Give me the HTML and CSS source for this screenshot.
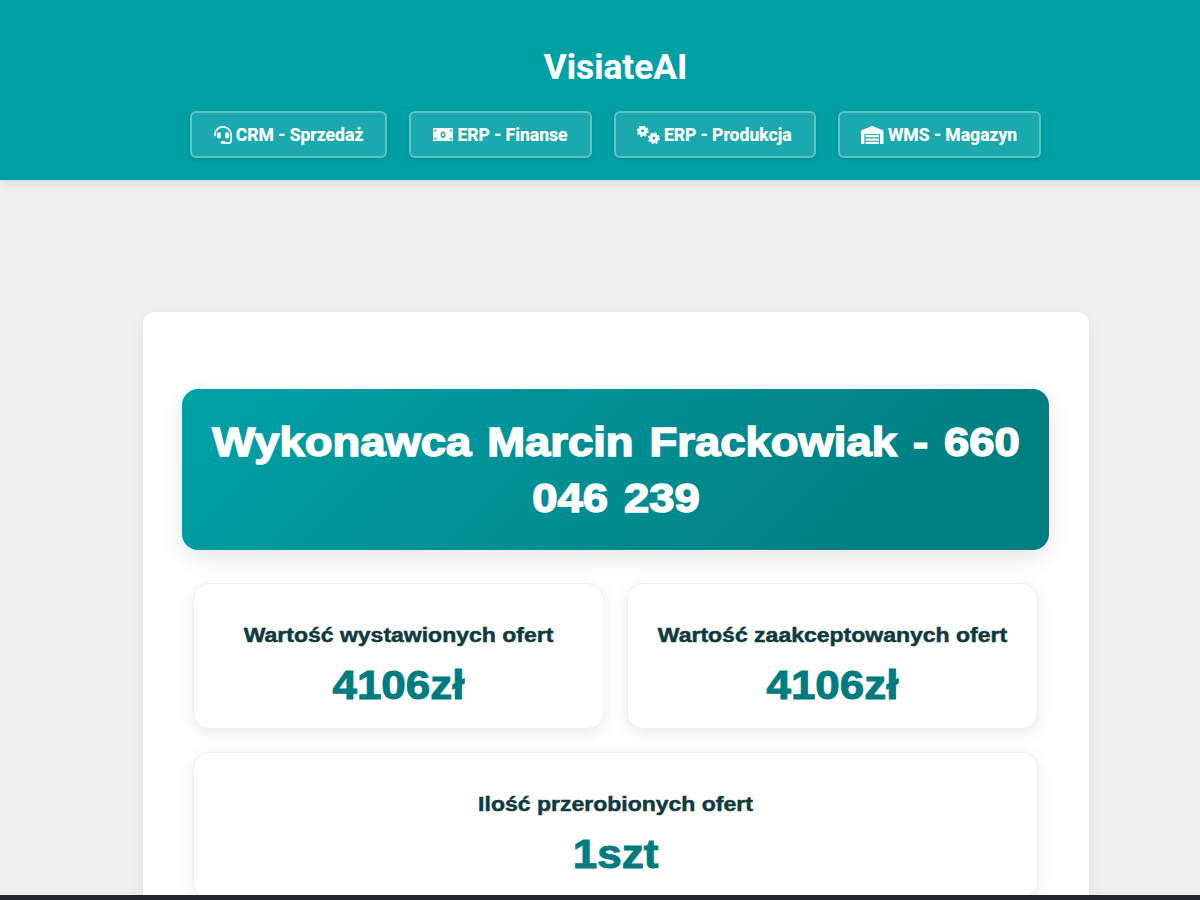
FILE: index.html
```html
<!DOCTYPE html>
<html lang="pl">
<head>
  <meta charset="UTF-8">
  <meta name="viewport" content="width=device-width, initial-scale=1.0">
  <title>VisiateAI</title>
  <link rel="stylesheet" href="styles.css">
</head>
<body>
  <header class="header">
    <h1 class="brand">VisiateAI</h1>
    <nav class="nav">
      <a class="nav-btn" href="#">
        <svg class="icon" viewBox="0 0 512 512"><path d="M192 208c0-17.67-14.33-32-32-32h-16c-35.35 0-64 28.65-64 64v48c0 35.35 28.65 64 64 64h16c17.67 0 32-14.33 32-32V208zm176 144c35.35 0 64-28.65 64-64v-48c0-35.35-28.65-64-64-64h-16c-17.67 0-32 14.33-32 32v112c0 17.67 14.33 32 32 32h16zM256 0C113.18 0 4.58 118.83 0 256v16c0 8.84 7.16 16 16 16h16c8.84 0 16-7.16 16-16v-16c0-114.69 93.31-208 208-208s208 93.31 208 208h-.12c.08 2.43.12 165.72.12 165.72 0 23.35-18.93 42.28-42.28 42.28H320c0-26.51-21.49-48-48-48h-32c-26.51 0-48 21.49-48 48s21.49 48 48 48h181.72c49.86 0 90.28-40.42 90.28-90.28V256C507.42 118.83 398.82 0 256 0z"/></svg>
        CRM - Sprzedaż
      </a>
      <a class="nav-btn" href="#">
        <svg class="icon icon-money" viewBox="0 64 640 384" preserveAspectRatio="none"><path d="M608 64H32C14.33 64 0 78.33 0 96v320c0 17.67 14.33 32 32 32h576c17.67 0 32-14.33 32-32V96c0-17.67-14.33-32-32-32zM48 400v-64c35.35 0 64 28.65 64 64H48zm0-224v-64h64c0 35.35-28.65 64-64 64zm272 176c-44.19 0-80-42.99-80-96 0-53.02 35.82-96 80-96s80 42.98 80 96c0 53.03-35.83 96-80 96zm272 48h-64c0-35.35 28.65-64 64-64v64zm0-224c-35.35 0-64-28.65-64-64h64v64z"/><circle cx="320" cy="256" r="42"/></svg>
        ERP - Finanse
      </a>
      <a class="nav-btn" href="#">
        <svg class="icon icon-wide" viewBox="0 0 640 512">
          <g fill="none" stroke="#fff">
            <circle cx="160" cy="145" r="90" stroke-width="95"/>
            <circle cx="160" cy="145" r="140" stroke-width="60" stroke-dasharray="55 54.96"/>
            <circle cx="480" cy="350" r="90" stroke-width="95"/>
            <circle cx="480" cy="350" r="140" stroke-width="60" stroke-dasharray="55 54.96"/>
          </g>
        </svg>
        ERP - Produkcja
      </a>
      <a class="nav-btn" href="#">
        <svg class="icon icon-wide" viewBox="0 0 640 512"><path d="M504 352H136.4c-4.4 0-8 3.6-8 8l-.1 48c0 4.4 3.6 8 8 8H504c4.4 0 8-3.6 8-8v-48c0-4.4-3.6-8-8-8zm0 96H136.1c-4.4 0-8 3.6-8 8l-.1 48c0 4.4 3.6 8 8 8h368c4.4 0 8-3.6 8-8v-48c0-4.4-3.6-8-8-8zm0-192H136.6c-4.4 0-8 3.6-8 8l-.1 48c0 4.4 3.6 8 8 8H504c4.4 0 8-3.6 8-8v-48c0-4.4-3.6-8-8-8zm106.5-139L338.4 3.7a48.15 48.15 0 0 0-36.9 0L29.5 117C11.7 124.5 0 141.9 0 161.3V504c0 4.4 3.6 8 8 8h80c4.4 0 8-3.6 8-8V256c0-17.6 14.6-32 32.6-32h382.8c18 0 32.6 14.4 32.6 32v248c0 4.4 3.6 8 8 8h80c4.4 0 8-3.6 8-8V161.3c0-19.4-11.7-36.8-29.5-44.3z"/></svg>
        WMS - Magazyn
      </a>
    </nav>
  </header>

  <main class="panel">
    <div class="hero">
      <h2>Wykonawca Marcin Frackowiak - 660 046 239</h2>
    </div>
    <div class="stats">
      <div class="stat-card">
        <h3>Wartość wystawionych ofert</h3>
        <p class="stat-value">4106zł</p>
      </div>
      <div class="stat-card">
        <h3>Wartość zaakceptowanych ofert</h3>
        <p class="stat-value">4106zł</p>
      </div>
      <div class="stat-card stat-wide">
        <h3>Ilość przerobionych ofert</h3>
        <p class="stat-value">1szt</p>
      </div>
    </div>
  </main>

  <div class="taskbar"></div>
</body>
</html>
```

FILE: styles.css
```css
html {
  overflow: hidden;
}
/* the page is wider than the window, so everything centres a bit right of the middle */
body {
  width: 1231px;
  margin: 0;
  padding: 0;
  background-color: #efefef;
  font-family: "Liberation Sans", Arial, sans-serif;
}

/* Top bar */
.header {
  height: 180px;
  box-sizing: border-box;
  padding-top: 48px;
  background-color: #00a0a5;
  box-shadow: 0 2px 10px rgba(0, 0, 0, 0.1);
  text-align: center;
}
.brand {
  margin: 0 0 25px;
  font-family: Roboto, sans-serif;
  font-size: 35.2px;
  font-weight: 700;
  line-height: 38px;
  color: #fff;
  -webkit-text-stroke: 0.2px #fff;
}
.nav {
  display: flex;
  justify-content: center;
  gap: 22px;
}
.nav-btn {
  display: flex;
  align-items: center;
  gap: 4px;
  height: 47px;
  box-sizing: border-box;
  padding: 0 21.9px;
  border: 2px solid rgba(255, 255, 255, 0.3);
  border-radius: 6px;
  background-color: rgba(255, 255, 255, 0.1);
  box-shadow: 0 2px 5px rgba(0, 0, 0, 0.1);
  font-family: Roboto, sans-serif;
  font-size: 17.6px;
  font-weight: 700;
  color: #fff;
  text-decoration: none;
  -webkit-text-stroke: 0.2px #fff;
}
.icon {
  width: 18px;
  height: 18px;
  fill: #fff;
}
.icon-wide {
  width: 22.5px;
}
.icon-money {
  width: 20.25px;
  height: 13.5px;
}

/* Main panel */
.panel {
  width: 946px;
  box-sizing: border-box;
  margin: 132px auto 0;
  padding: 77px 39.5px 40px;
  border-radius: 12px;
  background-color: #fff;
  box-shadow: 0 4px 20px rgba(0, 0, 0, 0.05);
}
.hero {
  padding: 25px 16px 24px;
  border-radius: 16px;
  background: linear-gradient(135deg, #00a0a5 5%, #007f83 85%);
  box-shadow: 0 8px 24px rgba(0, 0, 0, 0.1);
  text-align: center;
}
/* no heavy Arial here: bold stretched sideways comes closest */
.hero h2 {
  width: 760px;
  margin: 0 auto;
  font-size: 40px;
  font-weight: 700;
  line-height: 56px;
  word-spacing: 3px;
  color: #fff;
  -webkit-text-stroke: 1.5px #fff;
  transform: scaleX(1.135);
}

/* Stat cards */
.stats {
  display: grid;
  grid-template-columns: 1fr 1fr;
  gap: 23px;
  margin: 33px 11px 0;
}
.stat-card {
  height: 146px;
  box-sizing: border-box;
  padding-top: 38px;
  border: 1px solid #eaeff1;
  border-radius: 16px;
  background-color: #fff;
  box-shadow: 0 4px 16px rgba(0, 0, 0, 0.09);
  text-align: center;
}
.stat-wide {
  grid-column: 1 / 3;
}
.stat-card h3 {
  margin: 0;
  font-size: 20px;
  font-weight: 700;
  line-height: 26px;
  color: #0f3b40;
  -webkit-text-stroke: 0.5px #0f3b40;
  transform: scaleX(1.15);
}
.stat-value {
  margin: 14px 0 0;
  font-size: 40px;
  font-weight: 700;
  line-height: 46px;
  color: #007c80;
  -webkit-text-stroke: 1px #007c80;
  transform: scaleX(1.1);
}

/* Strip of the desktop below the window */
.taskbar {
  position: fixed;
  left: 0;
  right: 0;
  bottom: 0;
  height: 5px;
  background-color: #22262a;
}
```
